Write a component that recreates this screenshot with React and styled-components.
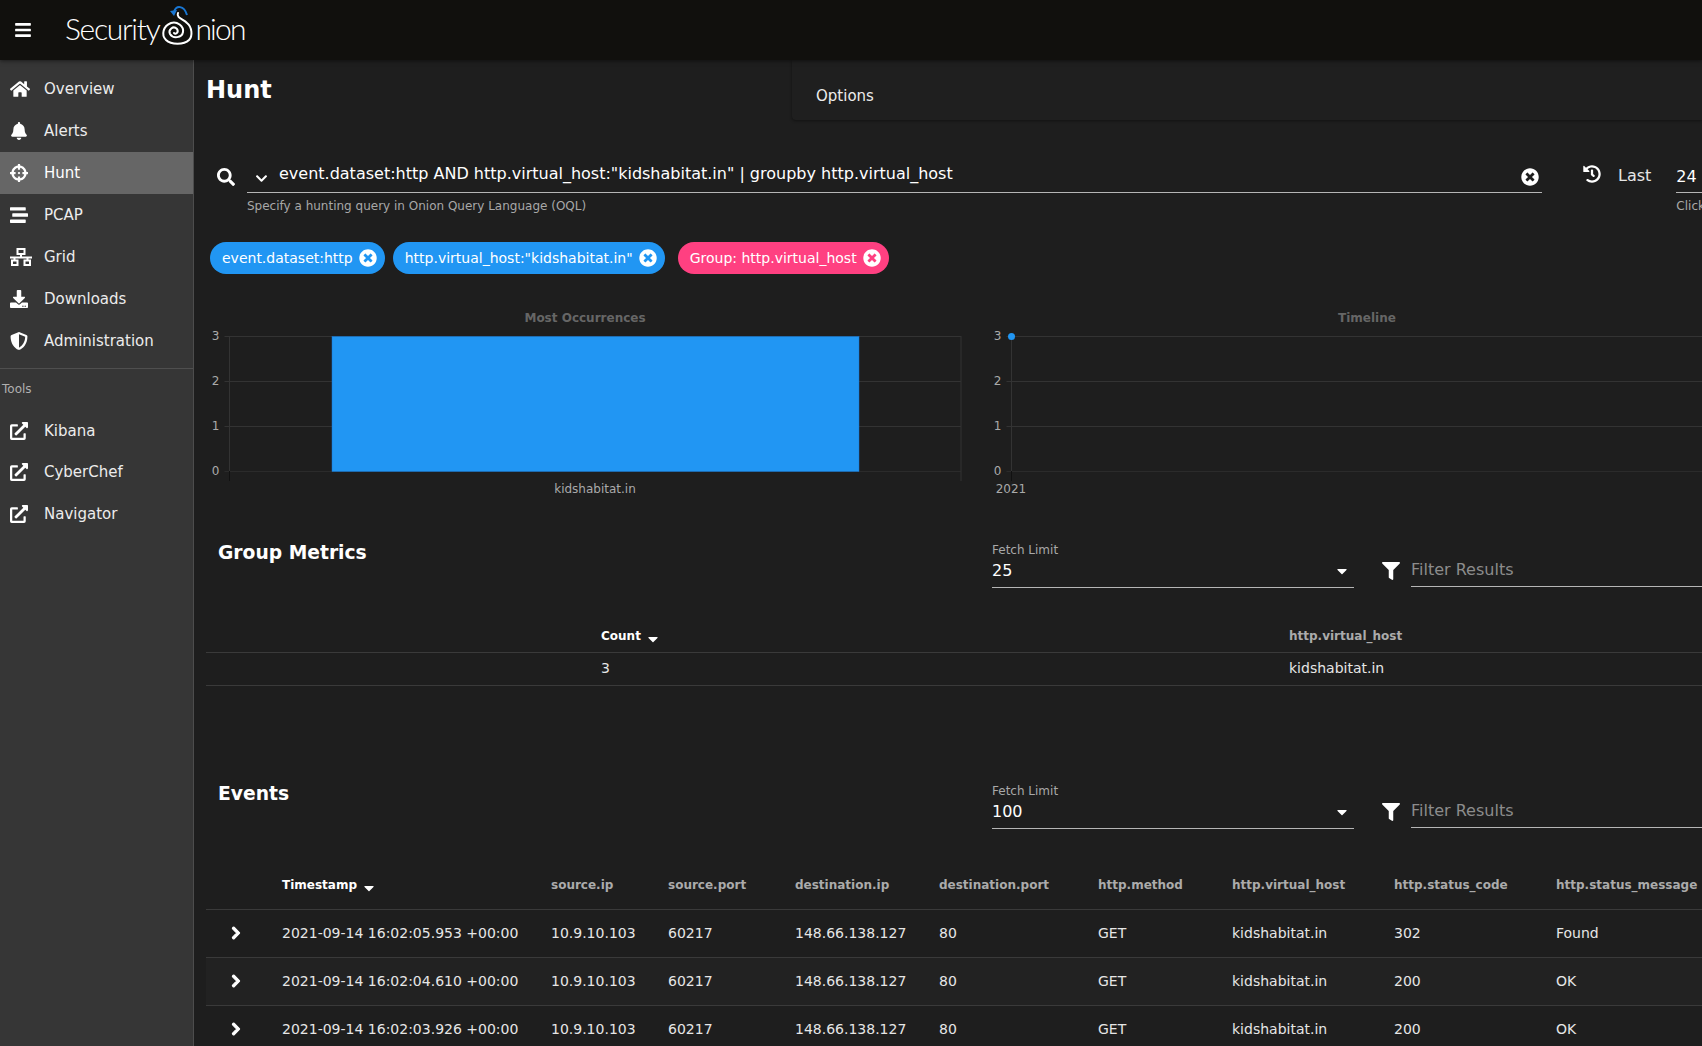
import React from "react";
import styled, { createGlobalStyle } from "styled-components";
import {
  FaBars,
  FaHome,
  FaBell,
  FaCrosshairs,
  FaStream,
  FaDownload,
  FaShieldAlt,
  FaExternalLinkAlt,
  FaSearch,
  FaChevronDown,
  FaChevronRight,
  FaTimesCircle,
  FaHistory,
  FaFilter,
  FaCaretDown,
} from "react-icons/fa";

const GlobalStyle = createGlobalStyle`
  html, body {
    margin: 0;
    height: 100%;
    overflow: hidden;
    background: #1e1e1e;
    font-family: "DejaVu Sans", sans-serif;
    color: #fff;
  }
`;

// the outlined sitemap in the reference is not in the package
function GridIcon() {
  return (
    <svg width="22" height="18" viewBox="0 0 22 18" fill="none" stroke="currentColor" strokeWidth="2">
      <rect x="7.5" y="1" width="7" height="5" />
      <path d="M11 6v3M0 9.5h22M4.5 9.5v3M17.5 9.5v3" />
      <rect x="2" y="12.5" width="5.5" height="4.5" />
      <rect x="14.5" y="12.5" width="5.5" height="4.5" />
    </svg>
  );
}

const NAV = [
  { label: "Overview", icon: FaHome, size: 20 },
  { label: "Alerts", icon: FaBell },
  { label: "Hunt", icon: FaCrosshairs, active: true },
  { label: "PCAP", icon: FaStream },
  { label: "Grid", icon: GridIcon },
  { label: "Downloads", icon: FaDownload },
  { label: "Administration", icon: FaShieldAlt },
];
const TOOLS = ["Kibana", "CyberChef", "Navigator"];

const EVENT_COLUMNS = [
  { key: "expand", label: "", width: 60 },
  { key: "ts", label: "Timestamp", width: 269, sorted: true },
  { key: "sip", label: "source.ip", width: 117 },
  { key: "sport", label: "source.port", width: 127 },
  { key: "dip", label: "destination.ip", width: 144 },
  { key: "dport", label: "destination.port", width: 159 },
  { key: "method", label: "http.method", width: 134 },
  { key: "host", label: "http.virtual_host", width: 162 },
  { key: "code", label: "http.status_code", width: 162 },
  { key: "msg", label: "http.status_message", width: 173 },
];

const EVENTS = [
  ["2021-09-14 16:02:05.953 +00:00", "302", "Found"],
  ["2021-09-14 16:02:04.610 +00:00", "200", "OK"],
  ["2021-09-14 16:02:03.926 +00:00", "200", "OK"],
];

function Logo() {
  return (
    <LogoWrap>
      <LogoText>Security</LogoText>
      <svg width="40" height="48" viewBox="0 0 40 48" fill="none">
        <path
          d="M19 11 C17 16 24 17 28 21 C33 25 34 34 30 38 C25 43 12 43 7 38 C2 33 4 24 12 21 C18 19 25 24 24 30 C23 36 14 37 11 32 C9 28 14 23 18 27 C20 30 17 33 15 31"
          stroke="#fff"
          strokeWidth="2"
          strokeLinecap="round"
        />
        <path d="M15 10 C17 3 25 3 28 13" stroke="#1976d2" strokeWidth="2" />
        <path d="M11 9 L18 8 L15 14 Z" fill="#1976d2" />
      </svg>
      <LogoText $tight>nion</LogoText>
    </LogoWrap>
  );
}

function Chart({ width, x0, x1, offset, title, titleX, rightLine, children, label, labelX }) {
  const ys = [471, 426, 381, 336].map((y) => y - 305);
  const left = x0 - offset;
  const right = x1 - offset;
  return (
    <ChartSvg width={width} height="200">
      <ChartTitle x={titleX - offset} y="17" textAnchor="middle">
        {title}
      </ChartTitle>
      {ys.map((y, i) => (
        <g key={y}>
          <line x1={left - 5} x2={right} y1={y + 0.5} y2={y + 0.5} stroke={i === 0 ? "#2b2b2b" : "#333"} />
          <TickLabel x={left - 10} y={y + 4} textAnchor="end">
            {i}
          </TickLabel>
        </g>
      ))}
      <line x1={left} x2={left} y1="31" y2="176" stroke="#333" />
      <line x1={left} x2={left} y1="166" y2="176" stroke="#111" />
      {rightLine && <line x1={right} x2={right} y1="31" y2="176" stroke="#333" />}
      {children}
      <TickLabel x={labelX - offset} y="188" textAnchor="middle">
        {label}
      </TickLabel>
    </ChartSvg>
  );
}

function SectionHeader({ title, limit }) {
  return (
    <SectionRow>
      <SectionTitle>{title}</SectionTitle>
      <SelectField>
        <FieldLabel>Fetch Limit</FieldLabel>
        <SelectValue>
          {limit}
          <FaCaretDown size={16} />
        </SelectValue>
      </SelectField>
      <FilterField>
        <FaFilter size={18} />
        <FilterInput>Filter Results</FilterInput>
      </FilterField>
    </SectionRow>
  );
}

export default function App() {
  return (
    <Page>
      <GlobalStyle />
      <TopBar>
        <FaBars size={18} />
        <Logo />
      </TopBar>
      <Body>
        <SideNav>
          <NavList>
            {NAV.map(({ label, icon: Icon, active, size = 18 }) => (
              <NavItem key={label} $active={active}>
                <NavIcon>
                  <Icon size={size} />
                </NavIcon>
                {label}
              </NavItem>
            ))}
          </NavList>
          <NavDivider />
          <ToolsLabel>Tools</ToolsLabel>
          <NavList>
            {TOOLS.map((label) => (
              <NavItem key={label}>
                <NavIcon>
                  <FaExternalLinkAlt size={18} />
                </NavIcon>
                {label}
              </NavItem>
            ))}
          </NavList>
        </SideNav>

        <Main>
          <TopRow>
            <PageTitle>Hunt</PageTitle>
            <OptionsPanel>Options</OptionsPanel>
          </TopRow>

          <SearchRow>
            <SearchIcon>
              <FaSearch size={18} />
            </SearchIcon>
            <QueryField>
              <QueryLine>
                <FaChevronDown size={13} />
                <QueryText>
                  event.dataset:http AND http.virtual_host:"kidshabitat.in" | groupby http.virtual_host
                </QueryText>
                <FaTimesCircle size={18} />
              </QueryLine>
              <Hint>Specify a hunting query in Onion Query Language (OQL)</Hint>
            </QueryField>
            <HistoryIcon>
              <FaHistory size={18} />
            </HistoryIcon>
            <LastLabel>Last</LastLabel>
            <RangeField>
              <RangeValue>24</RangeValue>
              <Hint>Click</Hint>
            </RangeField>
          </SearchRow>

          <ChipRow>
            <Chip>
              event.dataset:http
              <ChipClose>
                <FaTimesCircle size={18} />
              </ChipClose>
            </Chip>
            <Chip>
              http.virtual_host:"kidshabitat.in"
              <ChipClose>
                <FaTimesCircle size={18} />
              </ChipClose>
            </Chip>
            <Chip $group>
              Group: http.virtual_host
              <ChipClose>
                <FaTimesCircle size={18} />
              </ChipClose>
            </Chip>
          </ChipRow>

          <ChartRow>
            <Chart
              width={769}
              offset={206}
              x0={229.5}
              x1={961}
              title="Most Occurrences"
              titleX={585}
              rightLine
              label="kidshabitat.in"
              labelX={595}
            >
              <rect x={332 - 206} y="31.5" width="527" height="135" fill="#2196f3" stroke="#1976d2" strokeWidth="0.5" />
            </Chart>
            <Chart
              width={727}
              offset={975}
              x0={1011.5}
              x1={1702}
              title="Timeline"
              titleX={1367}
              label="2021"
              labelX={1011}
            >
              <circle cx={36.5} cy="31.5" r="3.5" fill="#2196f3" />
            </Chart>
          </ChartRow>

          <SectionHeader title="Group Metrics" limit="25" />
          <GroupTable>
            <thead>
              <tr>
                <HeadCell $w={379} $compact />
                <HeadCell $w={688} $compact $sorted>
                  Count
                  <SortArrow />
                </HeadCell>
                <HeadCell $w={440} $compact>
                  http.virtual_host
                </HeadCell>
              </tr>
            </thead>
            <tbody>
              <CompactRow>
                <Cell />
                <Cell>3</Cell>
                <Cell>kidshabitat.in</Cell>
              </CompactRow>
            </tbody>
          </GroupTable>

          <EventsHeader>
            <SectionHeader title="Events" limit="100" />
          </EventsHeader>
          <EventsTable>
            <thead>
              <tr>
                {EVENT_COLUMNS.map((col) => (
                  <HeadCell key={col.key} $w={col.width} $sorted={col.sorted}>
                    {col.label}
                    {col.sorted && <SortArrow />}
                  </HeadCell>
                ))}
              </tr>
            </thead>
            <tbody>
              {EVENTS.map(([ts, code, msg], i) => (
                <EventRow key={ts} $hover={i === 1}>
                  <Cell $expand>
                    <FaChevronRight size={14} />
                  </Cell>
                  <Cell>{ts}</Cell>
                  <Cell>10.9.10.103</Cell>
                  <Cell>60217</Cell>
                  <Cell>148.66.138.127</Cell>
                  <Cell>80</Cell>
                  <Cell>GET</Cell>
                  <Cell>kidshabitat.in</Cell>
                  <Cell>{code}</Cell>
                  <Cell>{msg}</Cell>
                </EventRow>
              ))}
            </tbody>
          </EventsTable>
        </Main>
      </Body>
    </Page>
  );
}

const Page = styled.div`
  width: 1702px;
  height: 1046px;
  overflow: hidden;
  display: flex;
  flex-direction: column;
`;

const TopBar = styled.header`
  flex: 0 0 60px;
  display: flex;
  align-items: center;
  padding-left: 14px;
  background: #11100d;
  box-shadow: 0 1px 4px rgba(0, 0, 0, 0.5);
  position: relative;
  z-index: 2;
`;

const LogoWrap = styled.div`
  display: flex;
  align-items: center;
  margin: 0 0 4px 33px;
  height: 54px;
  svg {
    flex: none;
    margin: -4px -4px 0 0;
  }
`;

const LogoText = styled.span`
  font-family: "Lato", sans-serif;
  font-weight: 300;
  font-size: 30px;
  letter-spacing: ${(p) => (p.$tight ? "-1.8px" : "-1.3px")};
  color: #fff;
`;

const Body = styled.div`
  flex: 1;
  display: flex;
  min-height: 0;
`;

const SideNav = styled.nav`
  flex: 0 0 193px;
  background: #363636;
  border-right: 1px solid #4d4d4d;
`;

const NavList = styled.div`
  padding-top: 8px;
`;

const NavItem = styled.div`
  height: 41.95px;
  display: flex;
  align-items: center;
  padding-left: 10px;
  font-size: 15px;
  color: ${(p) => (p.$active ? "#fff" : "#ececec")};
  background: ${(p) => (p.$active ? "#666666" : "transparent")};
`;

const NavIcon = styled.span`
  flex: 0 0 34px;
  display: flex;
  color: #fff;
`;

const NavDivider = styled.div`
  height: 1px;
  margin-top: 6.5px;
  background: #4f4f4f;
`;

const ToolsLabel = styled.div`
  padding: 12px 0 0 2px;
  font-size: 12px;
  line-height: 16px;
  color: #b0b0b0;
  margin-bottom: 4.5px;
`;

const Main = styled.main`
  flex: 1;
  min-width: 0;
  padding-left: 12px;
  background: #1e1e1e;
  overflow: hidden;
`;

const TopRow = styled.div`
  height: 60px;
  display: flex;
  align-items: flex-start;
  justify-content: space-between;
`;

const PageTitle = styled.h1`
  margin: 15px 0 0;
  font-size: 24px;
  line-height: 30px;
  font-weight: 700;
`;

const OptionsPanel = styled.div`
  width: 910px;
  height: 60px;
  box-sizing: border-box;
  padding: 25px 0 0 24px;
  font-size: 15px;
  line-height: 22px;
  color: #ececec;
  background: #1f1f1f;
  border-bottom-left-radius: 4px;
  box-shadow: 0 1px 3px rgba(0, 0, 0, 0.4);
`;

const SearchRow = styled.div`
  display: flex;
  align-items: flex-start;
  margin-top: 40px;
  height: 54px;
`;

const SearchIcon = styled.span`
  flex: none;
  margin: 8px 0 0 11px;
  width: 30px;
  display: flex;
`;

const QueryField = styled.div`
  flex: 0 0 1295px;
`;

const QueryLine = styled.div`
  height: 32px;
  display: flex;
  align-items: center;
  padding: 0 3px 0 8px;
  border-bottom: 1px solid #b5b5b5;
  svg:first-child {
    margin-top: 5px;
  }
  svg:last-child {
    margin-top: 1px;
  }
`;

const QueryText = styled.span`
  flex: 1;
  margin: -5px 0 0 11px;
  font-size: 16px;
  color: #fff;
  white-space: nowrap;
`;

const Hint = styled.div`
  margin-top: 5px;
  font-size: 12px;
  line-height: 16px;
  color: #a8a8a8;
  white-space: nowrap;
`;

const HistoryIcon = styled.span`
  flex: none;
  margin: 5px 0 0 41px;
  display: flex;
`;

const LastLabel = styled.span`
  flex: none;
  margin: 4px 0 0 17px;
  font-size: 16px;
  line-height: 24px;
  color: #e6e6e6;
`;

const RangeField = styled.div`
  flex: none;
  margin-left: 25px;
  width: 60px;
`;

const RangeValue = styled.div`
  height: 33px;
  box-sizing: border-box;
  padding-top: 5px;
  font-size: 16px;
  line-height: 24px;
  border-bottom: 1px solid #b5b5b5;
`;

const ChipRow = styled.div`
  display: flex;
  gap: 8px;
  margin-top: 28px;
  padding-left: 4px;
`;

const Chip = styled.div`
  height: 32px;
  display: flex;
  align-items: center;
  padding: 0 8px 0 12px;
  border-radius: 16px;
  font-size: 14px;
  color: #fff;
  white-space: nowrap;
  background: ${(p) => (p.$group ? "#ff4081" : "#2196f3")};
  margin-left: ${(p) => (p.$group ? "5px" : "0")};
`;

const ChipClose = styled.span`
  display: flex;
  margin-left: 6px;
`;

const ChartRow = styled.div`
  display: flex;
  margin-top: 31px;
  height: 200px;
`;

const ChartSvg = styled.svg`
  flex: none;
`;

const ChartTitle = styled.text`
  font-size: 12px;
  font-weight: 700;
  fill: #666666;
`;

const TickLabel = styled.text`
  font-size: 12px;
  fill: #aaaaaa;
`;

const SectionRow = styled.div`
  display: grid;
  grid-template-columns: 774px 362px 1fr;
  margin-top: 36px;
  padding-left: 12px;
  align-items: start;
`;

const SectionTitle = styled.h2`
  margin: 0;
  font-size: 18.72px;
  line-height: 24px;
  font-weight: 700;
`;

const SelectField = styled.div`
  border-bottom: 1px solid #b5b5b5;
  height: 46px;
`;

const FieldLabel = styled.div`
  padding-top: 1px;
  font-size: 12px;
  line-height: 16px;
  color: #a8a8a8;
`;

const SelectValue = styled.div`
  display: flex;
  align-items: center;
  justify-content: space-between;
  margin-top: 1px;
  padding-right: 4px;
  font-size: 16px;
  line-height: 24px;
`;

const FilterField = styled.div`
  display: flex;
  align-items: flex-start;
  height: 46px;
  margin-left: 28px;
  svg {
    flex: none;
    margin-top: 21px;
  }
`;

const FilterInput = styled.div`
  flex: 1;
  margin-left: 11px;
  height: 46px;
  box-sizing: border-box;
  padding-top: 17px;
  font-size: 16px;
  line-height: 24px;
  color: #8c8c8c;
  border-bottom: 1px solid #b5b5b5;
`;

const GroupTable = styled.table`
  width: 1507px;
  table-layout: fixed;
  border-collapse: collapse;
  margin-top: 25px;
`;

const EventsHeader = styled.div`
  margin-top: 96px;
`;

const EventsTable = styled(GroupTable)`
  margin-top: 33px;
`;

const HeadCell = styled.th`
  width: ${(p) => p.$w}px;
  height: ${(p) => (p.$compact ? 39 : 48)}px;
  box-sizing: border-box;
  padding: 0 0 ${(p) => (p.$compact ? 8 : 16)}px 16px;
  vertical-align: bottom;
  text-align: left;
  font-size: 12px;
  line-height: 16px;
  font-weight: 700;
  white-space: nowrap;
  color: ${(p) => (p.$sorted ? "#fff" : "#ababab")};
  border-bottom: 1px solid #3a3a3a;
`;

const SortArrow = styled(FaCaretDown)`
  margin: 0 0 -7px 4px;
  font-size: 16px;
`;

const CompactRow = styled.tr`
  height: 33px;
  td {
    padding-bottom: 2px;
  }
`;

const EventRow = styled.tr`
  height: 48px;
  background: ${(p) => (p.$hover ? "#222222" : "transparent")};
  td {
    padding-bottom: 2px;
  }
`;

const Cell = styled.td`
  padding: 0 0 0 ${(p) => (p.$expand ? 23 : 16)}px;
  font-size: 14px;
  color: #e6e6e6;
  white-space: nowrap;
  border-bottom: 1px solid #3a3a3a;
  svg {
    display: block;
    color: #fff;
    stroke: currentColor;
    stroke-width: 40;
  }
`;
